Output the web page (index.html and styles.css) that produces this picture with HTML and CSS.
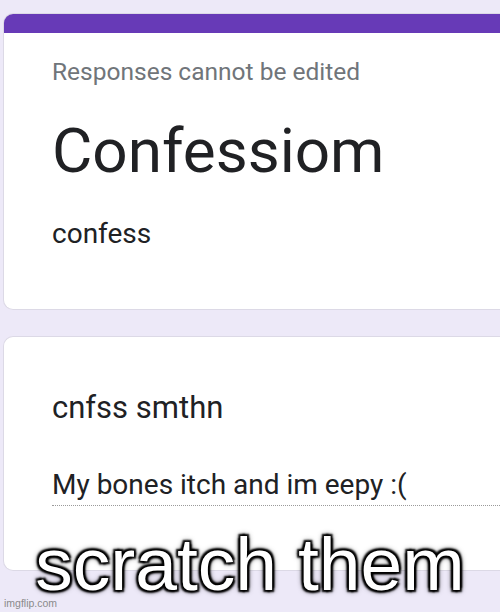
FILE: index.html
```html
<!DOCTYPE html>
<html lang="en">
  <head>
    <meta charset="UTF-8" />
    <title>Confessiom</title>
    <link rel="stylesheet" href="styles.css">
  </head>
  <body>
    <div class="form-page">
      <div class="form-card form-header">
        <div class="header-bar"></div>
        <div class="header-body">
          <div class="form-note">Responses cannot be edited</div>
          <h1 class="form-title">Confessiom</h1>
          <div class="form-desc">confess</div>
        </div>
      </div>

      <div class="form-card question-card">
        <div class="question-title">cnfss smthn</div>
        <div class="question-answer">My bones itch and im eepy :(</div>
      </div>
    </div>

    <div class="meme-caption">scratch them</div>
    <div class="watermark">imgflip.com</div>
  </body>
</html>
```

FILE: styles.css
```css
:root {
  --page-bg: #ede9f8;
  --accent: #673ab7;
  --text-dark: #202124;
  --text-muted: #70757a;
}

html,
body {
  margin: 0;
  height: 100%;
  overflow: hidden;
}

body {
  background: var(--page-bg);
  font-family: Roboto, "Noto Sans", Arial, sans-serif;
  position: relative;
}

.form-page {
  display: flex;
  flex-direction: column;
  gap: 26px;
  padding: 13px 0 0 3px;
}

.form-card {
  background: #fff;
  border: 1px solid #dcd9e6;
  border-right: none;
  border-radius: 10px 0 0 10px;
  overflow: hidden;
}

.header-bar {
  height: 19px;
  background: var(--accent);
}

.header-body {
  padding: 25px 0 57px 48px;
}

.form-note {
  font-size: 24.5px;
  color: var(--text-muted);
  line-height: 28px;
}

.form-title {
  margin: 25px 0 0;
  font-size: 62px;
  font-weight: 400;
  line-height: 80px;
  color: var(--text-dark);
}

.form-desc {
  margin-top: 25px;
  font-size: 28px;
  line-height: 36px;
  color: var(--text-dark);
}

.question-card {
  height: 235px;
  padding: 53px 0 0 48px;
  box-sizing: border-box;
}

.question-title {
  font-size: 31px;
  line-height: 36px;
  color: var(--text-dark);
}

.question-answer {
  margin-top: 41px;
  font-size: 28px;
  line-height: 36px;
  color: var(--text-dark);
  border-bottom: 1px dotted #9a9a9a;
  padding-bottom: 2px;
}

.meme-caption {
  position: absolute;
  left: 0;
  right: 0;
  top: 533px;
  text-align: center;
  font-family: "Liberation Sans", Arial, sans-serif;
  font-size: 75px;
  line-height: 62px;
  color: #fff;
  text-shadow: 2px 2px 2px #000, -2px -2px 2px #000, 2px -2px 2px #000,
    -2px 2px 2px #000, 0 0 6px #000;
}

.watermark {
  position: absolute;
  left: 4px;
  bottom: 3px;
  font-family: "Liberation Sans", Arial, sans-serif;
  font-size: 10.5px;
  color: #8a8a8a;
}
```
